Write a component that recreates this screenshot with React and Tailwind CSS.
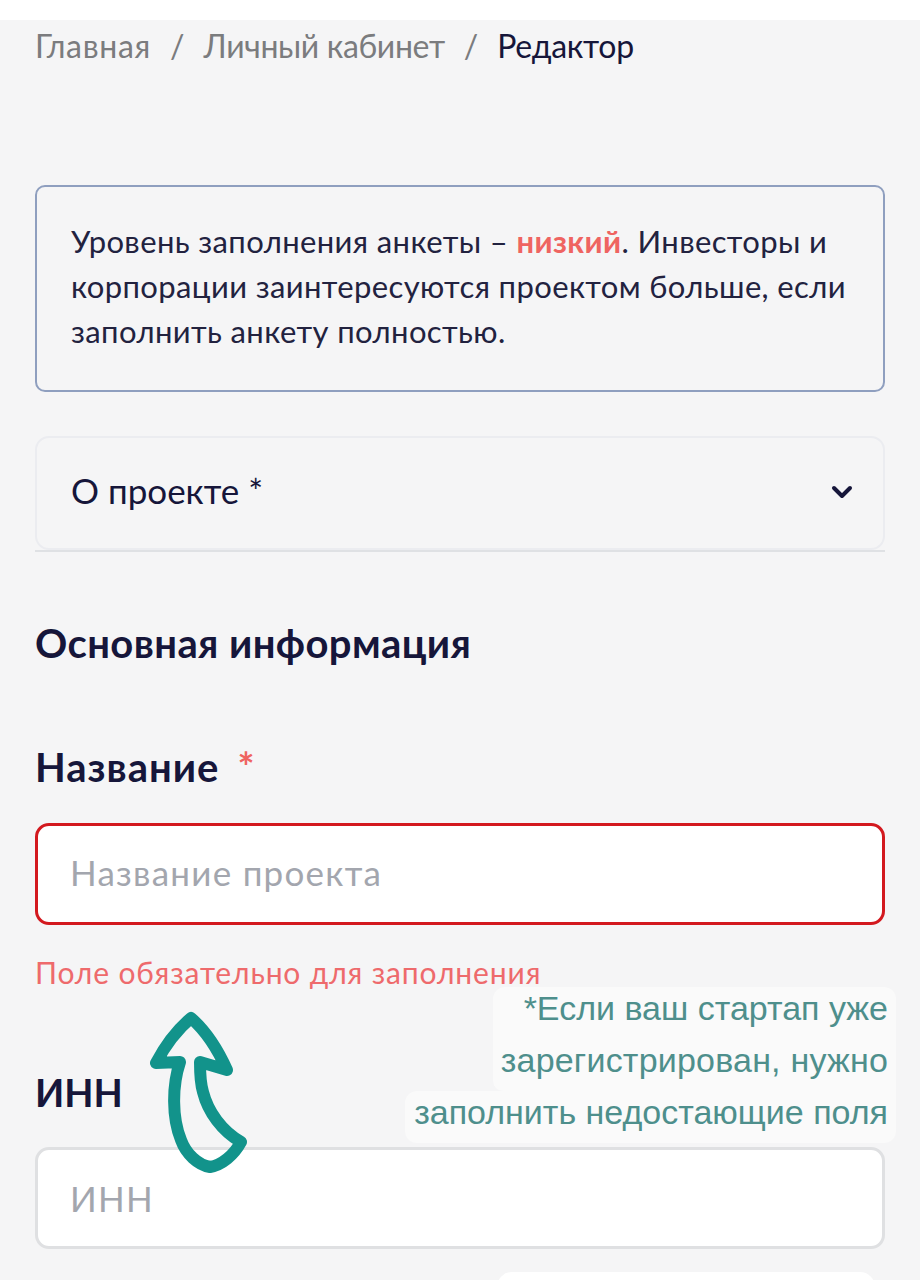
import React from 'react';
import { ChevronDown } from 'lucide-react';

const Field = ({ placeholder, error }) => (
  <div className={`h-[102px] rounded-[14px] bg-white flex items-center px-[32px] border-[3px] ${error ? 'border-[#d3191f] pb-[3px]' : 'border-[#dfe0e2]'}`}>
    <span className="text-[35px] tracking-[1.25px] text-[#a3a6ae]">{placeholder}</span>
  </div>
);

const App = () => {
  return (
    <div className="relative h-[1280px] overflow-hidden bg-white font-['Lato','Noto_Sans',sans-serif] text-[#16163a]">
      <div className="mt-[20px] h-[1260px] bg-[#f5f5f6] px-[35px]">
        {/* Breadcrumbs */}
        <div className="h-[52px] flex items-center text-[32px] text-[#7b7c7e]">
          <span className="tracking-[0.7px]">Главная</span>
          <span className="mx-[19px]">/</span>
          <span className="tracking-[-0.35px]">Личный кабинет</span>
          <span className="mx-[19px]">/</span>
          <span className="tracking-[-0.3px] text-[#16163a]">Редактор</span>
        </div>

        {/* Notice */}
        <div className="mt-[113px] h-[207px] rounded-[10px] border-2 border-[#8f9fbf] px-[34px] pt-[32px] text-[31px] leading-[45px] tracking-[0.38px] whitespace-nowrap text-[#22223f]">
          Уровень заполнения анкеты – <span className="font-bold text-[#ef6461]">низкий</span>. Инвесторы и<br />
          корпорации заинтересуются проектом больше, если<br />
          заполнить анкету полностью.
        </div>

        {/* Accordion */}
        <div className="mt-[44px] border-b-2 border-[#dfe1e4]">
          <div className="h-[114px] rounded-[14px] border-2 border-[#ebecf0] flex items-center justify-between pl-[34px] pr-[25px] pb-[6px]">
            <span className="text-[35px] text-[#16163a]">О проекте *</span>
            <ChevronDown className="mt-[4px] w-[32px] h-[32px] text-[#16163a]" strokeWidth={3} />
          </div>
        </div>

        <h2 className="mt-[66px] text-[40px] leading-[50px] tracking-[0.4px] font-bold text-[#16163a]">Основная информация</h2>

        <label className="mt-[74px] flex items-center text-[40px] leading-[50px] tracking-[1px] font-bold text-[#16163a]">
          Название
          <span className="ml-[18px] text-[#ef6461]">*</span>
        </label>
        <div className="mt-[31px]">
          <Field placeholder="Название проекта" error />
        </div>
        <p className="mt-[29px] text-[30px] leading-[36px] tracking-[0.85px] text-[#ee6a6c]">Поле обязательно для заполнения</p>

        <label className="block mt-[77px] text-[38px] leading-[50px] font-bold text-[#16163a]">ИНН</label>
        <div className="mt-[30px]">
          <Field placeholder="ИНН" />
        </div>
      </div>

      {/* Note stuck on top of the screenshot */}
      <div className="absolute left-[405px] top-[987px] w-[491px] h-[156px] font-['Liberation_Sans',sans-serif] text-[34px] leading-[52px] text-[#4e8f8c] text-right">
        <div className="ml-[88px] h-[104px] rounded-t-[12px] rounded-bl-[10px] bg-[#fafafa] pr-[8px]">
          <div className="-translate-y-[5px]">
            *Если ваш стартап уже<br />
            <span className="tracking-[0.2px]">зарегистрирован, нужно</span>
          </div>
        </div>
        <div className="h-[52px] rounded-b-[12px] rounded-tl-[12px] bg-[#fafafa] pr-[8px]">
          <div className="-translate-y-[5px]">заполнить недостающие поля</div>
        </div>
      </div>
      <div className="absolute left-[497px] top-[1272px] w-[378px] h-[30px] rounded-[16px] bg-white" />

      {/* Hand drawn arrow */}
      <svg className="absolute left-[140px] top-[1000px]" width="120" height="185" viewBox="140 1000 120 185" fill="none">
        <path
          d="M191 1018 C178 1029 166 1044 156 1063 L180 1062 C172 1086 172 1118 181 1140 C186 1154 198 1165 210 1167 C222 1165 234 1155 241 1142 C222 1131 208 1112 203 1092 C200 1082 200 1072 200 1062 L227 1070 C218 1050 206 1031 191 1018 Z"
          stroke="#12938b"
          strokeWidth="12"
          strokeLinejoin="round"
        />
      </svg>
    </div>
  );
};

export default App;
